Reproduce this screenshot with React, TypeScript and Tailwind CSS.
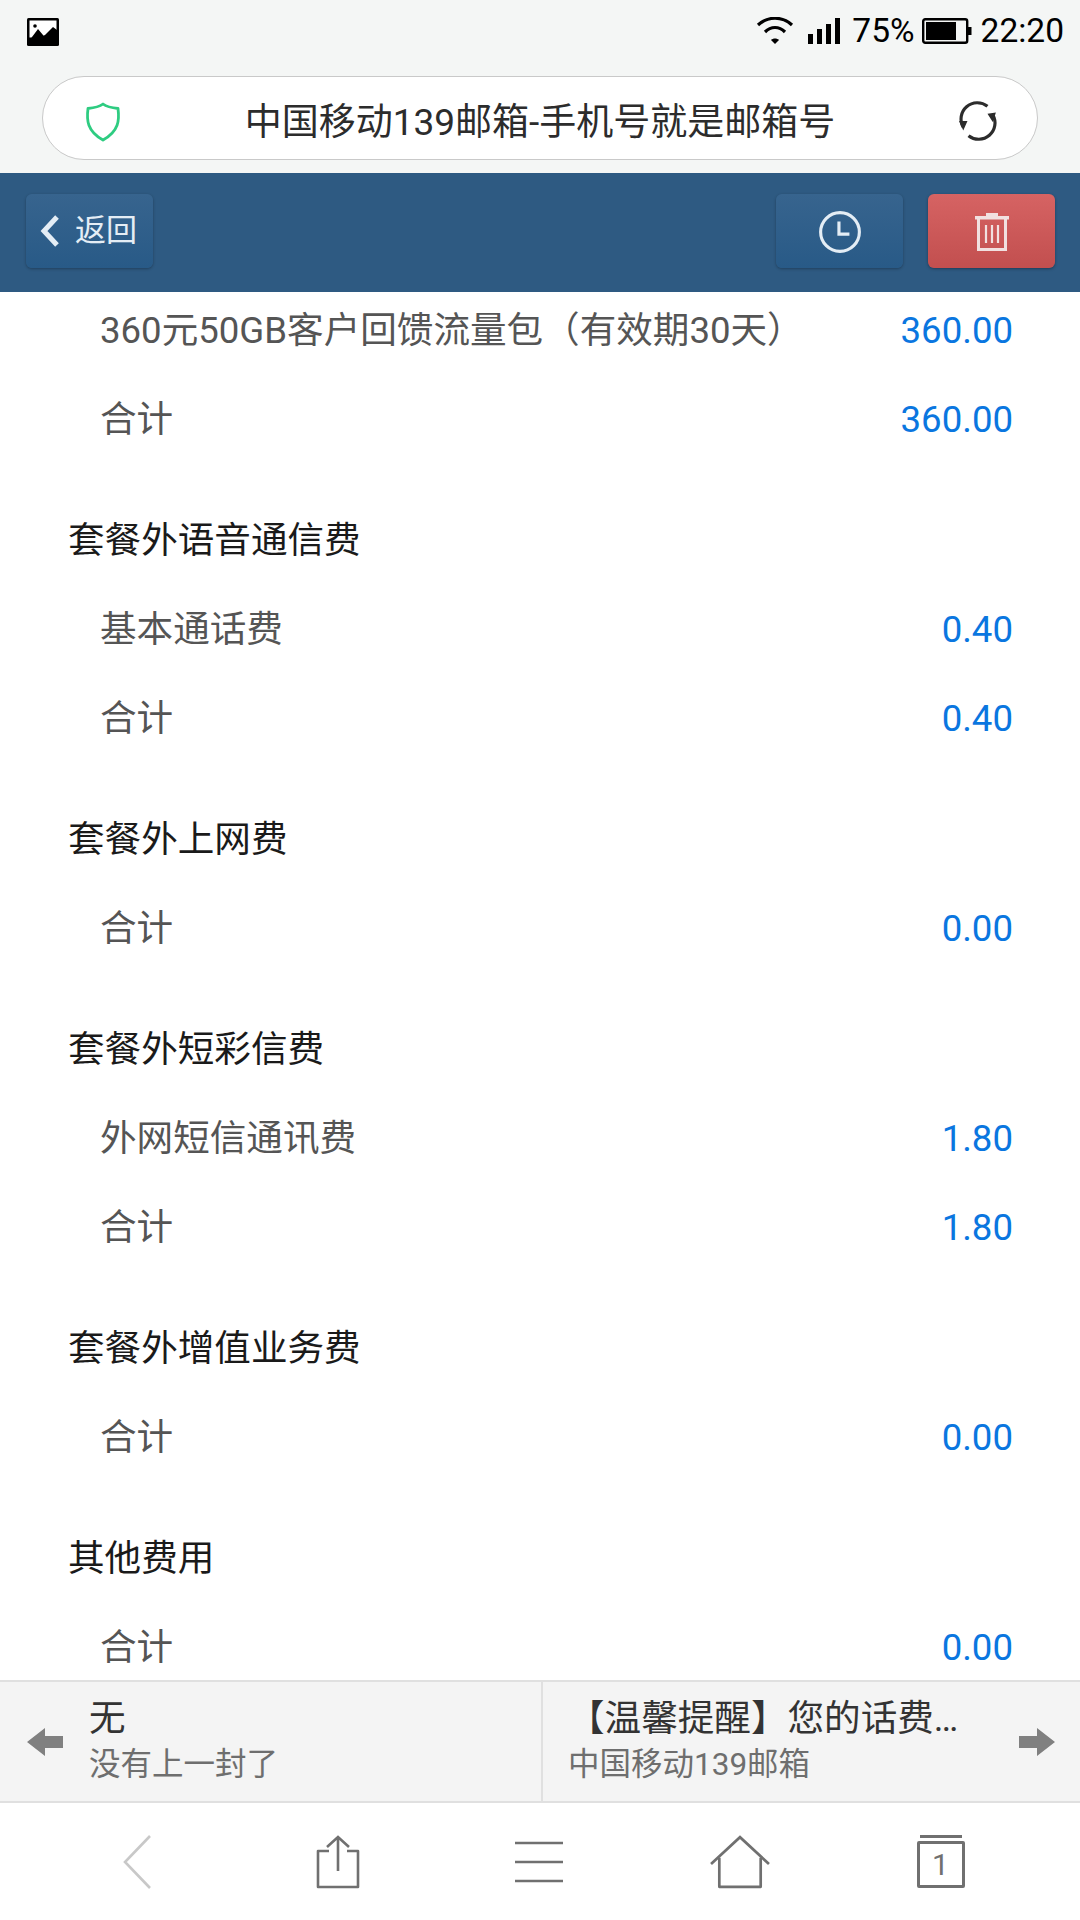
import React from 'react';

const font = { fontFamily: 'Roboto, "Noto Sans CJK SC", sans-serif' };

type Group = { title?: string; rows: [string, string][] };

const groups: Group[] = [
  { rows: [['360元50GB客户回馈流量包（有效期30天）', '360.00'], ['合计', '360.00']] },
  { title: '套餐外语音通信费', rows: [['基本通话费', '0.40'], ['合计', '0.40']] },
  { title: '套餐外上网费', rows: [['合计', '0.00']] },
  { title: '套餐外短彩信费', rows: [['外网短信通讯费', '1.80'], ['合计', '1.80']] },
  { title: '套餐外增值业务费', rows: [['合计', '0.00']] },
  { title: '其他费用', rows: [['合计', '0.00']] },
];

function StatusBar() {
  return (
    <div className="flex h-[76px] items-start justify-between bg-[#f4f6f5] pl-[27px] pr-[16px] pt-[12px]">
      <svg width="32" height="28" viewBox="0 0 32 28" className="mt-[6px]">
        <rect width="32" height="28" rx="1.5" fill="#000" />
        <rect x="2.5" y="2.5" width="27" height="17" fill="#fff" />
        <path d="M2 23 L11 11 L21 23 M18 17 L26 9 L30 12 V24 H2 Z" fill="#000" />
        <circle cx="8" cy="8" r="1.8" fill="#000" />
      </svg>
      <div className="flex items-center text-[33.5px] leading-[38px] text-black" style={font}>
        <svg width="38" height="28" viewBox="0 0 38 28">
          <path d="M2 8 C12 -1 26 -1 36 8" fill="none" stroke="#000" strokeWidth="3.2" />
          <path d="M9 15 C15 9 23 9 29 15" fill="none" stroke="#000" strokeWidth="3.2" />
          <path d="M15 23 L19 27 L23 23 C21 21 17 21 15 23 Z" fill="#000" />
        </svg>
        <svg width="34" height="26" viewBox="0 0 34 26" className="ml-[13px]">
          <rect x="1" y="16" width="5" height="10" fill="#000" />
          <rect x="10" y="11" width="5" height="15" fill="#000" />
          <rect x="19" y="6" width="5" height="20" fill="#000" />
          <rect x="28" y="0" width="5" height="26" fill="#000" />
        </svg>
        <span className="ml-[11px]">75%</span>
        <svg width="50" height="26" viewBox="0 0 50 26" className="ml-[7px]">
          <rect x="1.2" y="1.2" width="44" height="23.6" rx="2" fill="none" stroke="#000" strokeWidth="2.4" />
          <rect x="4" y="4" width="30" height="18" fill="#000" />
          <rect x="46" y="9" width="3.5" height="8" fill="#000" />
        </svg>
        <span className="ml-[9px]">22:20</span>
      </div>
    </div>
  );
}

function AddressBar() {
  return (
    <div className="h-[97px] bg-[#f4f6f5] pl-[42px] pr-[42px]">
      <div className="relative flex h-[84px] items-center justify-center rounded-[42px] border border-[#c9c9c9] bg-white">
        <svg width="36" height="40" viewBox="0 0 36 40" className="absolute left-[42px] top-[25px]">
          <path
            d="M18 2 C22 5 28 6 33 6.5 C34.5 18 34 29 18 38 C2 29 1.5 18 3 6.5 C8 6 14 5 18 2 Z"
            fill="none"
            stroke="#2ecc81"
            strokeWidth="2.8"
            strokeLinejoin="round"
          />
        </svg>
        <span className="mt-[9px] text-[37px] leading-[50px] text-[#2c2c2c]" style={font}>
          中国移动139邮箱-手机号就是邮箱号
        </span>
        <svg width="40" height="40" viewBox="0 0 38 38" className="absolute right-[39px] top-[24px]">
          <path d="M5 25 A15.5 15.5 0 0 1 28 5" fill="none" stroke="#2c2c2c" strokeWidth="3" />
          <path d="M33 13 A15.5 15.5 0 0 1 10 33" fill="none" stroke="#2c2c2c" strokeWidth="3" />
          <path d="M28 12 L36 11 L33 20 Z M1 19 L9 19 L5 28 Z" fill="#2c2c2c" />
        </svg>
      </div>
    </div>
  );
}

function HeaderButton({ red, wide, children }: { red?: boolean; wide?: boolean; children: React.ReactNode }) {
  return (
    <div
      className={
        red
          ? 'flex h-[74px] w-[127px] items-center justify-center rounded-[6px] bg-gradient-to-b from-[#d66363] to-[#c24f4f] shadow-[0_1px_3px_rgba(0,0,0,0.35)]'
          : wide
            ? 'flex h-[74px] w-[127px] items-center justify-center rounded-[6px] bg-gradient-to-b from-[#37648e] to-[#285a87] shadow-[0_1px_3px_rgba(0,0,0,0.3)]'
            : 'flex h-[74px] w-[127px] items-center rounded-[6px] bg-gradient-to-b from-[#37648e] to-[#285a87] pl-[14px] shadow-[0_1px_3px_rgba(0,0,0,0.3)]'
      }
    >
      {children}
    </div>
  );
}

function Header() {
  return (
    <div className="flex h-[119px] items-start justify-between bg-[#2e5a82] pl-[26px] pr-[25px] pt-[21px]">
      <HeaderButton>
        <svg width="20" height="32" viewBox="0 0 20 32" className="mr-[15px]">
          <path d="M17 2 L4 16 L17 30" fill="none" stroke="#e4edf5" strokeWidth="5" />
        </svg>
        <span className="text-[31px] leading-[40px] text-[#e4edf5]" style={font}>
          返回
        </span>
      </HeaderButton>
      <div className="flex gap-[25px]">
        <HeaderButton wide>
          <svg width="44" height="44" viewBox="0 0 42 42" className="mt-[2px]">
            <circle cx="21" cy="21" r="18.5" fill="none" stroke="#e4edf5" strokeWidth="3" />
            <path d="M20 11 V23 H30" fill="none" stroke="#e4edf5" strokeWidth="3" />
          </svg>
        </HeaderButton>
        <HeaderButton red>
          <svg width="34" height="40" viewBox="0 0 34 40" className="mt-[2px]">
            <path d="M11 4 V1 H23 V4" fill="#f1e0e0" />
            <rect x="0" y="4" width="34" height="3.5" fill="#f1e0e0" />
            <path d="M3.5 7 V37.5 H30.5 V7" fill="none" stroke="#f1e0e0" strokeWidth="3" />
            <path d="M11 13 V31 M17 13 V31 M23 13 V31" stroke="#f1e0e0" strokeWidth="2.2" />
          </svg>
        </HeaderButton>
      </div>
    </div>
  );
}

function BillList() {
  return (
    <div className="-mt-[5px] flex flex-col gap-[32px] pl-[68px] pr-[67px]" style={font}>
      {groups.map((g, i) => (
        <div key={i}>
          {g.title && <div className="flex h-[89px] items-center text-[36.6px] text-[#1a1a1a]">{g.title}</div>}
          {g.rows.map((r, j) => (
            <div key={j} className="flex h-[89px] items-center justify-between pl-[32px] text-[36.6px]">
              <span className="text-[#555555]">{r[0]}</span>
              <span className="text-[#0a76e0]">{r[1]}</span>
            </div>
          ))}
        </div>
      ))}
    </div>
  );
}

function MailNav() {
  return (
    <div className="flex h-[123px] border-y-2 border-[#e0e0e0] bg-[#f4f4f4]" style={font}>
      <div className="flex w-[543px] items-center border-r-2 border-[#e0e0e0] pl-[27px]">
        <svg width="37" height="30" viewBox="0 0 37 30" className="mr-[25px]">
          <path d="M0 15 L18 1 V9 H36 V21 H18 V29 Z" fill="#808080" />
        </svg>
        <div className="mt-[2px]">
          <div className="text-[36.6px] leading-[44px] text-[#333333]">无</div>
          <div className="text-[31.5px] leading-[48px] text-[#6e6e6e]">没有上一封了</div>
        </div>
      </div>
      <div className="flex flex-1 items-center justify-between pl-[25px] pr-[25px]">
        <div className="mt-[2px]">
          <div className="text-[36.6px] leading-[44px] text-[#333333]">【温馨提醒】您的话费…</div>
          <div className="text-[31.5px] leading-[48px] text-[#6e6e6e]">中国移动139邮箱</div>
        </div>
        <svg width="37" height="30" viewBox="0 0 37 30">
          <path d="M37 15 L19 1 V9 H1 V21 H19 V29 Z" fill="#808080" />
        </svg>
      </div>
    </div>
  );
}

function BottomBar() {
  return (
    <div className="flex h-[117px] items-start bg-white pl-[36px] pt-[32px]">
      <div className="flex w-[201px] justify-center">
        <svg width="30" height="54" viewBox="0 0 30 54">
          <path d="M28 1 L3 27 L28 53" fill="none" stroke="#c8c8c8" strokeWidth="2.6" />
        </svg>
      </div>
      <div className="flex w-[201px] justify-center">
        <svg width="44" height="54" viewBox="0 0 44 54">
          <path d="M13 16 H2 V52 H42 V16 H31" fill="none" stroke="#707070" strokeWidth="2.6" strokeLinejoin="round" />
          <path d="M22 36 V2 M11 12 L22 2 L33 12" fill="none" stroke="#707070" strokeWidth="2.6" />
        </svg>
      </div>
      <div className="flex w-[201px] justify-center">
        <svg width="50" height="46" viewBox="0 0 50 46" className="mt-[6px]">
          <path d="M1 2 H49 M1 21 H49 M1 40 H49" stroke="#707070" strokeWidth="2.6" />
        </svg>
      </div>
      <div className="flex w-[201px] justify-center">
        <svg width="60" height="54" viewBox="0 0 58 52">
          <path d="M1 28 L29 2 L57 28" fill="none" stroke="#707070" strokeWidth="2.6" />
          <path d="M9 22 V50 H49 V22" fill="none" stroke="#707070" strokeWidth="2.6" strokeLinejoin="round" />
        </svg>
      </div>
      <div className="flex w-[201px] justify-center">
        <div className="flex w-[48px] flex-col items-center">
          <div className="h-[3px] w-[42px] bg-[#707070]" />
          <div className="mt-[3px] flex h-[47px] w-[48px] items-center justify-center rounded-[2px] border-[3px] border-[#707070] text-[30px] leading-none text-[#707070]" style={font}>
            1
          </div>
        </div>
      </div>
    </div>
  );
}

export default function App() {
  return (
    <div className="flex h-[1920px] w-[1080px] flex-col overflow-hidden bg-white">
      <StatusBar />
      <AddressBar />
      <Header />
      <div className="min-h-0 flex-1 overflow-hidden">
        <BillList />
      </div>
      <MailNav />
      <BottomBar />
    </div>
  );
}
